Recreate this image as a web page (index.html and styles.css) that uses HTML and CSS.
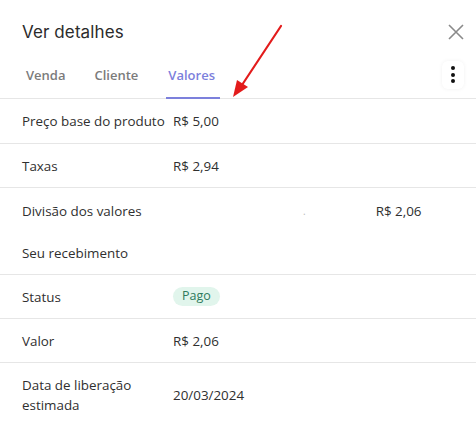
FILE: index.html
```html
<!DOCTYPE html>
<html lang="pt-BR">
<head>
<meta charset="utf-8">
<link rel="stylesheet" href="styles.css">
</head>
<body>
<div class="panel">
  <div class="header">
    <h1 class="title">Ver detalhes</h1>
    <button class="close" aria-label="Fechar">
      <svg width="16" height="16" viewBox="0 0 16 16"><path d="M1 1L15 15M15 1L1 15" stroke="#8a8a8a" stroke-width="1.6" fill="none"/></svg>
    </button>
  </div>
  <div class="tabs">
    <span class="tab">Venda</span>
    <span class="tab">Cliente</span>
    <span class="tab active">Valores</span>
    <span class="tabs-spacer"></span>
    <button class="kebab" aria-label="Mais">
      <span class="dot"></span><span class="dot"></span><span class="dot"></span>
    </button>
  </div>
  <div class="row">
    <span class="label">Preço base do produto</span>
    <span class="value">R$ 5,00</span>
  </div>
  <div class="row">
    <span class="label">Taxas</span>
    <span class="value">R$ 2,94</span>
  </div>
  <div class="row split">
    <div class="split-line">
      <span class="label">Divisão dos valores</span>
      <span class="faint">.</span>
      <span class="value right">R$ 2,06</span>
    </div>
    <div class="split-line">
      <span class="label">Seu recebimento</span>
    </div>
  </div>
  <div class="row">
    <span class="label">Status</span>
    <span class="pill">Pago</span>
  </div>
  <div class="row">
    <span class="label">Valor</span>
    <span class="value">R$ 2,06</span>
  </div>
  <div class="row last">
    <span class="label">Data de liberação estimada</span>
    <span class="value">20/03/2024</span>
  </div>
  <svg class="arrow" width="60" height="80" viewBox="0 0 60 80">
    <path d="M53 4L12 66" stroke="#e31b1b" stroke-width="2.2" fill="none" stroke-linecap="round"/>
    <path d="M5 75L9 58L20 65Z" fill="#e31b1b"/>
  </svg>
</div>
</body>
</html>
```
FILE: styles.css
```css
* { box-sizing: border-box; }
html, body { margin: 0; padding: 0; background: #fff; }
body { font-family: "Open Sans", "Noto Sans", sans-serif; color: #2f2f2f; }
.panel { position: relative; width: 476px; height: 438px; overflow: hidden; }
.header { display: flex; align-items: center; justify-content: space-between; padding: 18px 11px 0 22px; height: 46px; }
.title { margin: 0; font-family: Inter, sans-serif; font-weight: 400; font-size: 17px; color: #2b2b2b; letter-spacing: 0.1px; }
.close { border: 0; background: none; padding: 0; width: 18px; height: 18px; display: flex; align-items: center; justify-content: center; }
.tabs { display: flex; align-items: stretch; height: 53px; border-bottom: 1px solid #e6e6e6; padding: 0 12px 0 22px; }
.tab { font-size: 13px; font-weight: 600; color: #7b7b7b; display: flex; align-items: center; padding: 6px 4px 0; margin-right: 21px; border-bottom: 2px solid transparent; margin-bottom: -1px; }
.tab.active { color: #7c80dc; border-bottom-color: #7c80dc; margin-left: 3px; padding: 6px 5px 0 2px; }
.tabs-spacer { flex: 1; }
.kebab { align-self: center; margin-top: 5px; width: 22px; height: 28px; border: 0; background: #fff; border-radius: 6px; box-shadow: 0 0 4px rgba(0,0,0,0.06); display: flex; flex-direction: column; align-items: center; justify-content: center; gap: 2.4px; padding: 0; }
.dot { width: 4px; height: 4px; border-radius: 50%; background: #111; }
.row { display: flex; align-items: center; min-height: 44px; border-bottom: 1px solid #e6e6e6; padding: 0 22px; font-size: 13.4px; }
.row.last { border-bottom: 0; min-height: 64px; }
.label { width: 151px; flex: none; line-height: 20px; }
.value { color: #2f2f2f; }
.split { flex-direction: column; align-items: stretch; padding-top: 2px; min-height: 87px; }
.split-line { display: flex; align-items: center; height: 42px; }
.faint { color: #bbb; margin-left: 130px; font-size: 10px; }
.right { margin-left: 70px; }
.pill { background: #e1f5ec; color: #2e7b5c; border-radius: 10px; padding: 1px 9px 2px; font-size: 12.5px; line-height: 16px; }
.arrow { position: absolute; left: 228px; top: 22px; }
.tabs + .row { min-height: 45px; }
```
